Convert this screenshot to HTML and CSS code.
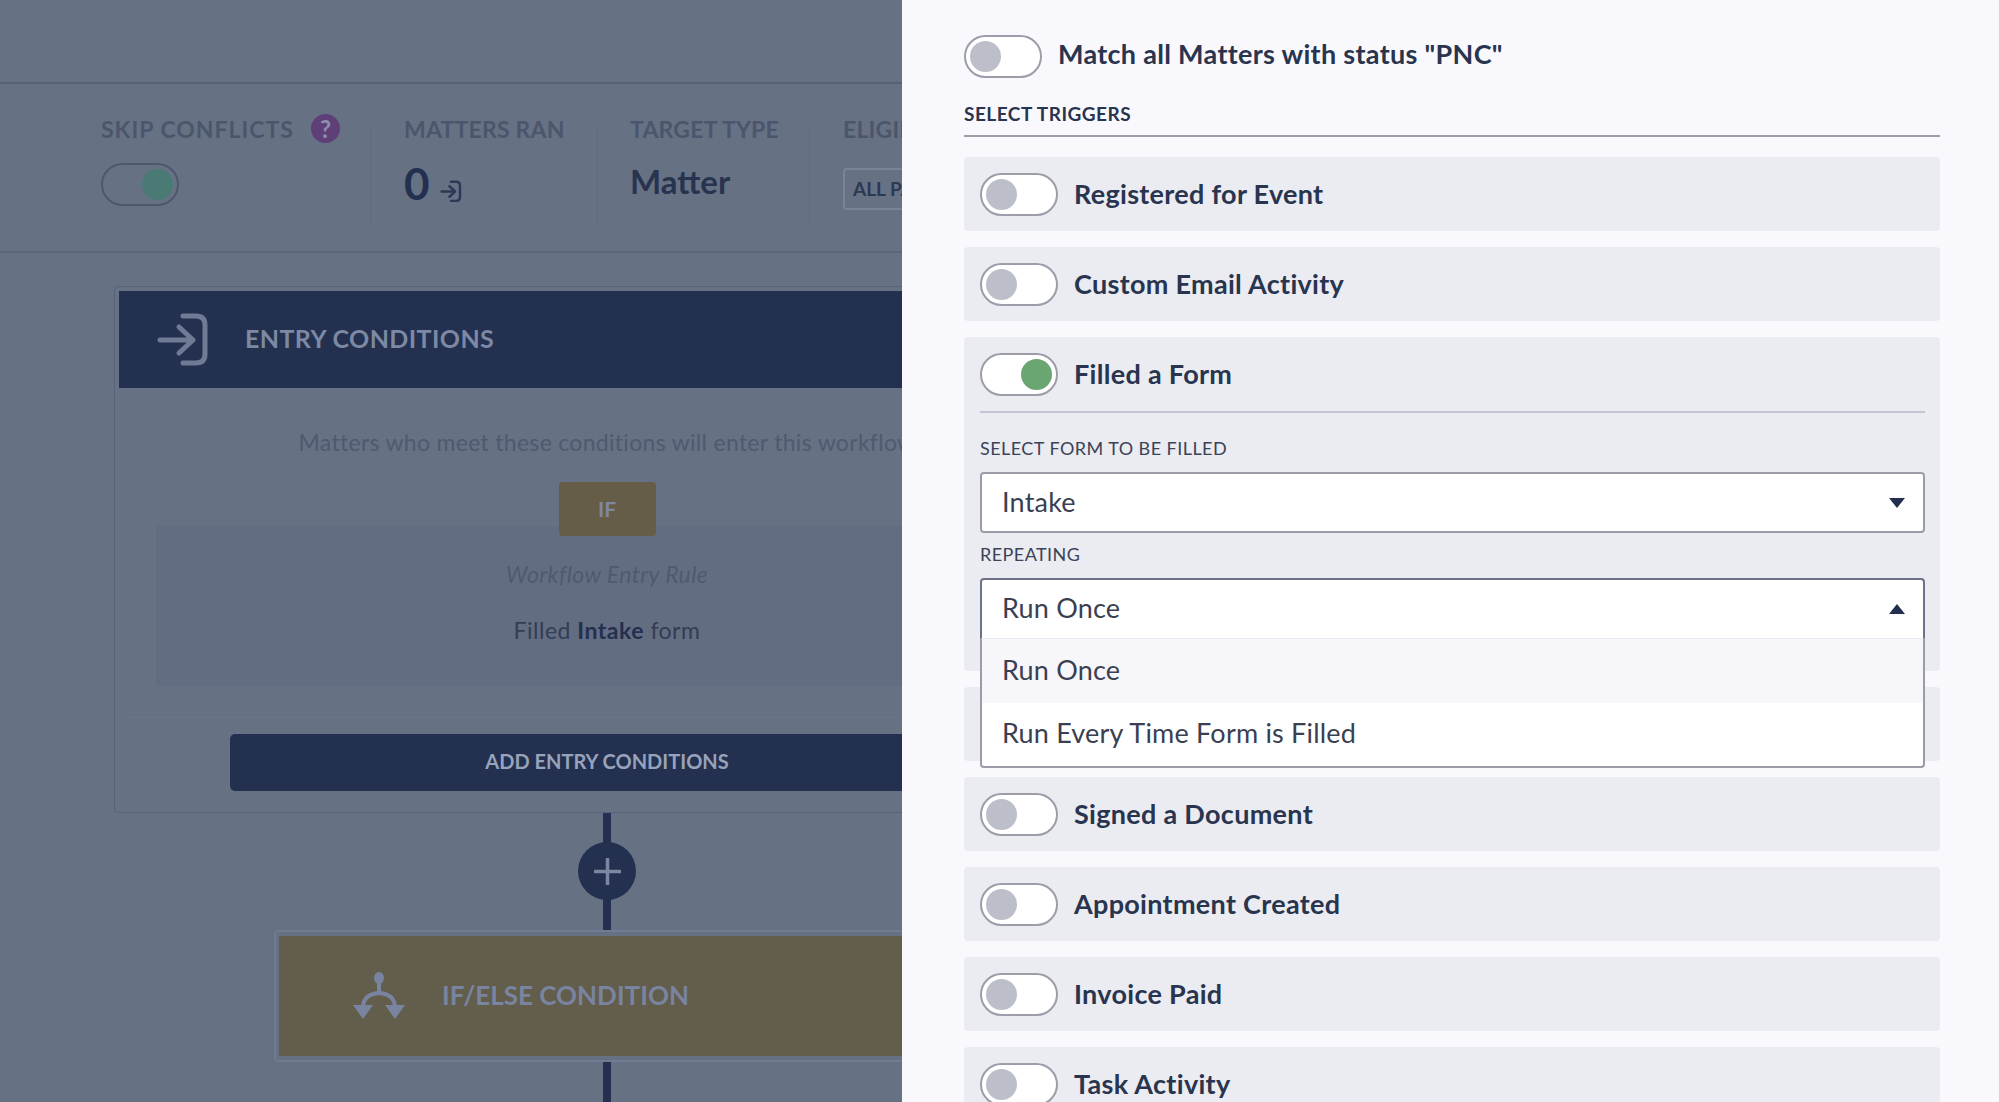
FILE: index.html
```html
<!DOCTYPE html>
<html lang="en">
<head>
    <meta charset="UTF-8">
    <title>Workflow triggers</title>
    <link rel="stylesheet" href="styles.css">
</head>
<body>
    <div class="backdrop">
        <div class="topbar"></div>
        <div class="stats">
            <div class="stat stat-skip">
                <div class="stat-title">SKIP CONFLICTS <span class="help">?</span></div>
                <div class="toggle toggle-dim on"><span class="knob"></span></div>
            </div>
            <div class="stat stat-ran">
                <div class="stat-title">MATTERS RAN</div>
                <div class="stat-count">0
                    <svg class="icon-small" viewBox="0 0 54 56" fill="none" stroke="currentColor" stroke-width="6" stroke-linecap="round" stroke-linejoin="round"><path d="M27 4H40Q49 4 49 13V42Q49 51 40 51H27"/><path d="M4 28H37M23 15L37 28L23 41"/></svg>
                </div>
            </div>
            <div class="stat stat-target">
                <div class="stat-title">TARGET TYPE</div>
                <div class="stat-value">Matter</div>
            </div>
            <div class="stat stat-eligible">
                <div class="stat-title">ELIGIBLE</div>
                <div class="stat-box">ALL PARTIES</div>
            </div>
        </div>
        <div class="canvas">
            <div class="card">
                <div class="card-head">
                    <svg class="icon-entry" viewBox="0 0 54 56" fill="none" stroke="currentColor" stroke-width="5" stroke-linecap="round" stroke-linejoin="round"><path d="M27 4H40Q49 4 49 13V42Q49 51 40 51H27"/><path d="M4 28H37M23 15L37 28L23 41"/></svg>
                    <span>ENTRY CONDITIONS</span>
                </div>
                <div class="card-body">
                    <p class="card-intro">Matters who meet these conditions will enter this workflow</p>
                    <div class="if-chip">IF</div>
                    <div class="rule">
                        <p class="rule-name">Workflow Entry Rule</p>
                        <p class="rule-text">Filled <b>Intake</b> form</p>
                    </div>
                    <div class="card-foot">
                        <button class="add-button">ADD ENTRY CONDITIONS</button>
                    </div>
                </div>
            </div>
            <div class="connector">
                <div class="plus">
                    <svg viewBox="0 0 27 27" width="27" height="27" fill="none" stroke="currentColor" stroke-width="3.5" stroke-linecap="round"><path d="M13.5 1V26M1 13.5H26"/></svg>
                </div>
            </div>
            <div class="condition-wrap">
                <div class="condition">
                    <svg class="icon-branch" viewBox="0 0 58 48" fill="none" stroke="currentColor" stroke-width="4" stroke-linecap="round"><ellipse cx="29" cy="6" rx="5" ry="6" fill="currentColor" stroke="none"/><path d="M29 8V21M29 21Q13 22 13 36M29 21Q45 22 45 36"/><path d="M3 33H23L13 47Z" fill="currentColor" stroke="none"/><path d="M35 33H55L45 47Z" fill="currentColor" stroke="none"/></svg>
                    <span>IF/ELSE CONDITION</span>
                </div>
            </div>
            <div class="connector-end"></div>
        </div>
    </div>

    <div class="panel">
        <div class="match-row">
            <div class="toggle"><span class="knob"></span></div>
            <span class="trigger-name">Match all Matters with status "PNC"</span>
        </div>
        <div class="section-title">SELECT TRIGGERS</div>

        <div class="trigger">
            <div class="trigger-head">
                <div class="toggle"><span class="knob"></span></div>
                <span class="trigger-name">Registered for Event</span>
            </div>
        </div>
        <div class="trigger">
            <div class="trigger-head">
                <div class="toggle"><span class="knob"></span></div>
                <span class="trigger-name">Custom Email Activity</span>
            </div>
        </div>
        <div class="trigger trigger-open">
            <div class="trigger-head">
                <div class="toggle on"><span class="knob"></span></div>
                <span class="trigger-name">Filled a Form</span>
            </div>
            <div class="trigger-fields">
                <label class="field-label">SELECT FORM TO BE FILLED</label>
                <div class="select">Intake <span class="caret"></span></div>
                <label class="field-label field-label-next">REPEATING</label>
                <div class="select-wrap">
                    <div class="select select-open">Run Once <span class="caret caret-up"></span></div>
                    <div class="menu">
                        <div class="menu-item menu-item-active">Run Once</div>
                        <div class="menu-item">Run Every Time Form is Filled</div>
                    </div>
                </div>
            </div>
        </div>
        <div class="trigger"></div>
        <div class="trigger">
            <div class="trigger-head">
                <div class="toggle"><span class="knob"></span></div>
                <span class="trigger-name">Signed a Document</span>
            </div>
        </div>
        <div class="trigger">
            <div class="trigger-head">
                <div class="toggle"><span class="knob"></span></div>
                <span class="trigger-name">Appointment Created</span>
            </div>
        </div>
        <div class="trigger">
            <div class="trigger-head">
                <div class="toggle"><span class="knob"></span></div>
                <span class="trigger-name">Invoice Paid</span>
            </div>
        </div>
        <div class="trigger">
            <div class="trigger-head">
                <div class="toggle"><span class="knob"></span></div>
                <span class="trigger-name">Task Activity</span>
            </div>
        </div>
    </div>
</body>
</html>
```

FILE: styles.css
```css
* {
    box-sizing: border-box;
}

html, body {
    height: 100%;
}

body {
    margin: 0;
    display: flex;
    height: 100vh;
    overflow: hidden;
    font-family: 'Lato', 'Open Sans', sans-serif;
    background: #667184;
}

p {
    margin: 0;
}

/* dimmed page behind the panel */
.backdrop {
    flex: 0 0 902px;
    height: 100%;
    overflow: hidden;
    background: #667184;
}

.topbar {
    height: 84px;
    border-bottom: 2px solid #586277;
}

.stats {
    display: flex;
    height: 169px;
    padding: 34px 0 0 101px;
    border-bottom: 2px solid #5c667b;
    white-space: nowrap;
}

.stat {
    height: 102px;
    margin-top: 7px;
    border-right: 1px solid #616b7f;
    flex-shrink: 0;
}

.stat-skip { width: 270px; }
.stat-ran { width: 227px; padding-left: 33px; }
.stat-target { width: 212px; padding-left: 32px; }
.stat-eligible { padding-left: 33px; border-right: none; }

.stat-title {
    display: flex;
    align-items: center;
    gap: 17px;
    height: 29px;
    margin-top: -11px;
    font-size: 23px;
    font-weight: 700;
    letter-spacing: 0.2px;
    color: #4b566c;
}

.stat-skip .stat-title {
    letter-spacing: 1px;
}

.help {
    width: 29px;
    height: 29px;
    border-radius: 50%;
    background: #5f3f78;
    color: #8d90ac;
    font-size: 24px;
    text-align: center;
    line-height: 29px;
    letter-spacing: 0;
}

.stat-skip .toggle {
    margin-top: 20px;
}

.stat-count {
    display: flex;
    align-items: flex-end;
    gap: 10px;
    margin-top: 15px;
    font-size: 44px;
    line-height: 50px;
    font-weight: 700;
    color: #23304f;
}

.icon-small {
    width: 22px;
    height: 23px;
    margin-bottom: 5px;
    color: #2c3854;
}

.stat-value {
    margin-top: 18px;
    font-size: 33px;
    line-height: 40px;
    font-weight: 700;
    color: #28344f;
}

.stat-box {
    width: 200px;
    height: 42px;
    margin-top: 25px;
    padding: 0 8px;
    border: 2px solid #7a8398;
    border-radius: 4px;
    font-size: 19px;
    line-height: 38px;
    font-weight: 700;
    color: #2c3854;
}

.canvas {
    padding: 33px 0 0 114px;
    width: 1100px;
}

.card {
    width: 986px;
    height: 527px;
    padding: 4px;
    border: 1px solid #58627a;
    border-radius: 4px;
}

.card-head {
    display: flex;
    align-items: center;
    gap: 35px;
    height: 97px;
    padding-left: 37px;
    background: #23304f;
    font-size: 25px;
    font-weight: 700;
    letter-spacing: 0.4px;
    color: #7d89a2;
}

.card-head span {
    padding-bottom: 4px;
}

.icon-entry {
    width: 54px;
    height: 56px;
    color: #6f7b94;
}

.card-body {
    text-align: center;
}

.card-intro {
    padding-top: 40px;
    font-size: 23px;
    line-height: 28px;
    letter-spacing: 0.3px;
    color: #4f5a70;
}

.if-chip {
    position: relative;
    width: 97px;
    height: 54px;
    margin: 26px auto 0;
    border-radius: 4px;
    background: #665d48;
    color: #8088a0;
    font-size: 21px;
    font-weight: 700;
    line-height: 54px;
}

.rule {
    height: 160px;
    margin: -10px 37px 0;
    padding-top: 34px;
    background: #636d81;
}

.rule-name {
    font-size: 23px;
    line-height: 28px;
    font-style: italic;
    letter-spacing: 0.4px;
    color: #4f5a70;
}

.rule-text {
    margin-top: 28px;
    font-size: 23px;
    line-height: 28px;
    letter-spacing: 0.5px;
    color: #323d55;
}

.rule-text b {
    color: #23304f;
}

.card-foot {
    height: 89px;
    margin: 31px 8px 0;
    padding-top: 16px;
    border-top: 1px solid #6b7589;
}

.add-button {
    display: block;
    width: 754px;
    height: 57px;
    margin: 0 auto;
    padding-bottom: 5px;
    border: none;
    border-radius: 5px;
    background: #23304f;
    color: #98a3bb;
    font-family: inherit;
    font-size: 20px;
    font-weight: 700;
}

.connector {
    position: relative;
    width: 8px;
    height: 117px;
    margin-left: 489px;
    background: #23304f;
}

.plus {
    position: absolute;
    top: 29px;
    left: -25px;
    display: flex;
    align-items: center;
    justify-content: center;
    width: 58px;
    height: 58px;
    border-radius: 50%;
    background: #23304f;
    color: #7b87a1;
}

.condition-wrap {
    width: 700px;
    height: 132px;
    margin-left: 160px;
    padding: 4px 3px;
    border: 2px solid #717c92;
    border-radius: 5px;
}

.condition {
    display: flex;
    align-items: center;
    gap: 34px;
    height: 100%;
    padding-left: 71px;
    background: #635d4c;
    font-size: 26px;
    font-weight: 700;
    color: #7884a0;
}

.condition span {
    padding-bottom: 2px;
}

.icon-branch {
    width: 58px;
    height: 48px;
    color: #7884a0;
}

.connector-end {
    width: 8px;
    height: 50px;
    margin-left: 489px;
    background: #23304f;
}

/* side panel */
.panel {
    flex: 1;
    height: 100%;
    overflow: hidden;
    padding: 35px 59px 0 62px;
    background: #f9f9fd;
}

.match-row {
    display: flex;
    align-items: center;
    gap: 16px;
}

.match-row .trigger-name {
    padding-bottom: 6px;
}

.toggle {
    display: flex;
    align-items: center;
    flex-shrink: 0;
    width: 78px;
    height: 43px;
    padding: 0 4px;
    border: 2px solid #9b9da9;
    border-radius: 22px;
    background: #fff;
}

.knob {
    width: 31px;
    height: 31px;
    border-radius: 50%;
    background: #bcbfc9;
}

.toggle.on {
    justify-content: flex-end;
}

.toggle.on .knob {
    background: #69a671;
}

.toggle-dim {
    background: transparent;
    border-color: #4d586e;
}

.toggle-dim.on .knob {
    background: #4a7a74;
}

.trigger-name {
    padding-bottom: 3px;
    font-size: 27px;
    font-weight: 700;
    letter-spacing: 0.3px;
    color: #29344f;
}

.section-title {
    height: 45px;
    margin-top: 14px;
    margin-bottom: 20px;
    padding-top: 11px;
    border-bottom: 2px solid #9a9ca8;
    font-size: 19px;
    line-height: 22px;
    font-weight: 700;
    letter-spacing: 0.5px;
    color: #29344f;
}

.trigger {
    height: 74px;
    margin-bottom: 16px;
    padding: 16px 15px 0 16px;
    border-radius: 4px;
    background: #eaecf1;
}

.trigger-open {
    height: 334px;
}

.trigger-head {
    display: flex;
    align-items: center;
    gap: 16px;
}

.trigger-fields {
    margin-top: 15px;
    padding-top: 24px;
    border-top: 2px solid #c3c6d2;
}

.field-label {
    display: block;
    margin-bottom: 12px;
    font-size: 18px;
    line-height: 23px;
    letter-spacing: 0.45px;
    color: #3c4257;
}

.field-label-next {
    margin-top: 10px;
}

.select {
    position: relative;
    height: 61px;
    padding-left: 20px;
    border: 2px solid #9a9ca8;
    border-radius: 4px;
    background: #fff;
    font-size: 27px;
    line-height: 55px;
    letter-spacing: 0.2px;
    color: #3a3f52;
}

.select-wrap {
    position: relative;
}

.select-open {
    border-color: #6e7288;
    border-bottom: 1px solid #e8e9ee;
    border-radius: 4px 4px 0 0;
}

.caret {
    position: absolute;
    top: 24px;
    right: 18px;
    border-left: 8px solid transparent;
    border-right: 8px solid transparent;
    border-top: 10px solid #232f4e;
}

.caret-up {
    border-top: none;
    border-bottom: 10px solid #232f4e;
}

.menu {
    position: absolute;
    top: 100%;
    left: 0;
    right: 0;
    border: 2px solid #9a9ca8;
    border-top: none;
    border-radius: 0 0 4px 4px;
    background: #fff;
}

.menu-item {
    height: 63px;
    padding-left: 20px;
    font-size: 27px;
    line-height: 59px;
    letter-spacing: 0.2px;
    color: #3a3f52;
}

.menu-item-active {
    height: 64px;
    line-height: 61px;
    background: #f6f6fb;
}
```
